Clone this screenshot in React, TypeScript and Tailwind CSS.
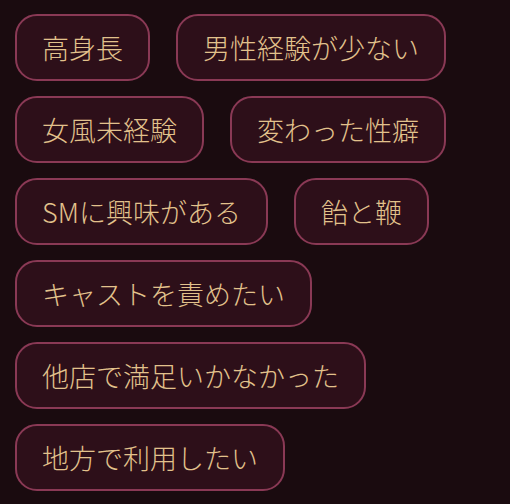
const tags = [
  ["高身長", "男性経験が少ない"],
  ["女風未経験", "変わった性癖"],
  ["SMに興味がある", "飴と鞭"],
  ["キャストを責めたい"],
  ["他店で満足いかなかった"],
  ["地方で利用したい"],
];

function Tag({ label }: { label: string }) {
  return (
    <span className="flex h-[67px] items-center rounded-[22px] border-2 border-[#8a3955] bg-[#2d0f19] px-[25px] text-[27px] font-light leading-none text-[#e2c28c]">
      {label}
    </span>
  );
}

export default function App() {
  return (
    <div
      className="min-h-[504px] w-full bg-[#1a0b0f] pl-[15px] pt-[14px]"
      style={{ fontFamily: '"Noto Sans CJK JP", "Noto Sans", sans-serif' }}
    >
      <div className="flex flex-col gap-[15px]">
        {tags.map((row, i) => (
          <div key={i} className="flex gap-[26px]">
            {row.map((t) => (
              <Tag key={t} label={t} />
            ))}
          </div>
        ))}
      </div>
    </div>
  );
}
